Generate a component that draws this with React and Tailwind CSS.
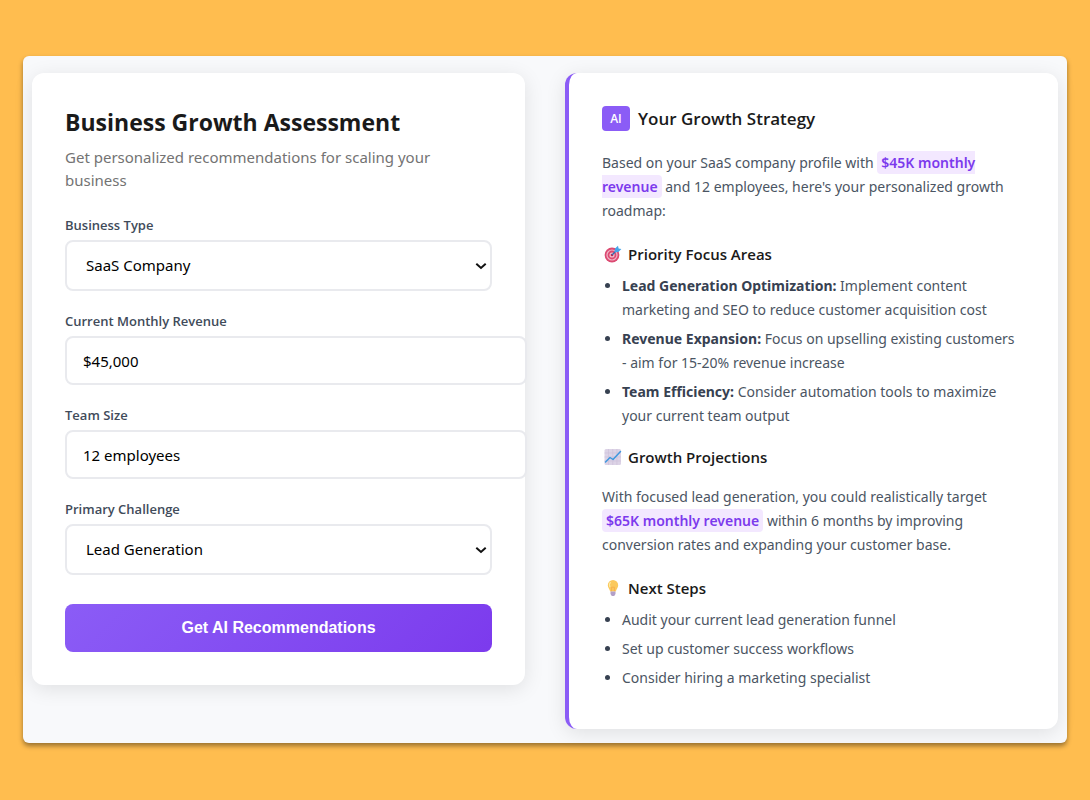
import { useState } from 'react';

const businessTypes = ['SaaS Company', 'E-commerce', 'Agency', 'Consulting'];
const challenges = ['Lead Generation', 'Customer Retention', 'Hiring', 'Operations'];

function SelectField({ id, label, options, value, onChange }) {
  return (
    <div>
      <label htmlFor={id} className="block text-[13px] leading-5 font-semibold text-[#414b5a] mb-[5px]">
        {label}
      </label>
      <div className="relative">
        <select
          id={id}
          value={value}
          onChange={(e) => onChange(e.target.value)}
          className="appearance-none block w-full h-[51px] pl-[19px] pr-8 border-2 border-[#e9eaee] rounded-lg bg-white font-['Noto_Sans',sans-serif] text-[15px] text-black"
        >
          {options.map((o) => (
            <option key={o}>{o}</option>
          ))}
        </select>
        <svg className="absolute right-[5px] top-5 pointer-events-none" width="12" height="12" viewBox="0 0 12 12" fill="none">
          <path d="M1.3 3.8 6 8l4.7-4.2" stroke="#111" strokeWidth="2" />
        </svg>
      </div>
    </div>
  );
}

function TextField({ id, label, value, onChange }) {
  return (
    <div>
      <label htmlFor={id} className="block text-[13px] leading-5 font-semibold text-[#414b5a] mb-[5px]">
        {label}
      </label>
      <input
        id={id}
        type="text"
        value={value}
        onChange={(e) => onChange(e.target.value)}
        className="block w-[calc(100%+35px)] h-[49px] px-4 border-2 border-[#e9eaee] rounded-lg bg-white font-['Noto_Sans',sans-serif] text-[15px] text-black"
      />
    </div>
  );
}

function Highlight({ children }) {
  return <span className="bg-[#f3e8ff] text-[#7c3aed] font-semibold px-1 py-0.5 rounded">{children}</span>;
}

function TargetIcon() {
  return (
    <svg width="18" height="18" viewBox="0 0 18 18" fill="none">
      <circle cx="8" cy="10" r="7.4" fill="#dc4a72" />
      <circle cx="8" cy="10" r="5.6" fill="#f0b4c6" />
      <circle cx="8" cy="10" r="4.4" fill="#dc4a72" />
      <circle cx="8" cy="10" r="2.6" fill="#f3bccb" />
      <circle cx="8" cy="10" r="1.3" fill="#c2264f" />
      <path d="M8 10 13 5" stroke="#2c6fb3" strokeWidth="1.3" />
      <path d="M10.6 7.2 10.8 3.8 14 .8l.6 2.6L17.4 4l-3 3z" fill="#45a5ea" />
    </svg>
  );
}

function ChartIcon() {
  return (
    <svg width="18" height="18" viewBox="0 0 18 18" fill="none">
      <rect x="0.5" y="1" width="16.5" height="16" rx="1.5" fill="#dcd3e6" />
      <path d="M4.5 1v16M8.7 1v16M12.9 1v16M.5 5h16.5M.5 9h16.5M.5 13h16.5" stroke="#cdc2da" strokeWidth="0.7" />
      <path d="M1.5 14 6 9.5l3 2 7.5-8" stroke="#3f98de" strokeWidth="1.5" strokeLinecap="round" strokeLinejoin="round" />
    </svg>
  );
}

function BulbIcon() {
  return (
    <svg width="18" height="18" viewBox="0 0 18 18" fill="none">
      <path d="M9 1a5.2 5.2 0 0 0-5.2 5.2c0 2.4 1.7 3.4 2.4 6.3h5.6c.7-2.9 2.4-3.9 2.4-6.3A5.2 5.2 0 0 0 9 1z" fill="#fbc95c" />
      <path d="M6.2 3.6C5.2 4.8 5.2 6.4 5.8 7.6" stroke="#fde9a8" strokeWidth="1.3" strokeLinecap="round" />
      <path d="M7.6 12.3V8.2h2.8v4.1" stroke="#f6a94a" strokeWidth="0.8" />
      <path d="M6.5 12.5h5v2.6L10.2 17H7.8l-1.3-1.9z" fill="#b3a0c8" />
    </svg>
  );
}

function SectionTitle({ icon, children }) {
  return (
    <h3 className="flex items-center gap-1.5 pl-0.5 font-['Open_Sans',sans-serif] text-[15px] leading-6 font-semibold text-[#1a1a1a]">
      {icon}
      {children}
    </h3>
  );
}

export default function App() {
  const [type, setType] = useState('SaaS Company');
  const [revenue, setRevenue] = useState('$45,000');
  const [team, setTeam] = useState('12 employees');
  const [challenge, setChallenge] = useState('Lead Generation');

  return (
    <div className="min-h-screen bg-[#ffbd4f] px-[23px] py-14 font-['Open_Sans',sans-serif]">
      <main className="grid grid-cols-2 items-start gap-10 rounded-md bg-[#f8f9fb] px-[9px] pt-[17px] pb-3.5 shadow-[0_3px_5px_rgba(0,0,0,0.4)]">
        <section className="rounded-xl bg-white px-[33px] pt-8 pb-[33px] shadow-[0_4px_20px_rgba(0,0,0,0.1)]">
          <h1 className="text-[23px] leading-[34px] font-bold text-[#1a1a1a]">Business Growth Assessment</h1>
          <p className="mt-[7px] font-['Noto_Sans',sans-serif] text-[15px] leading-[23px] text-[#737373]">
            Get personalized recommendations for scaling your business
          </p>

          <form onSubmit={(e) => e.preventDefault()} className="mt-[23px] flex flex-col gap-5">
            <SelectField id="type" label="Business Type" options={businessTypes} value={type} onChange={setType} />
            <TextField id="revenue" label="Current Monthly Revenue" value={revenue} onChange={setRevenue} />
            <TextField id="team" label="Team Size" value={team} onChange={setTeam} />
            <SelectField id="challenge" label="Primary Challenge" options={challenges} value={challenge} onChange={setChallenge} />
            <button
              type="submit"
              className="mt-[9px] h-12 w-full rounded-lg bg-linear-135 from-[#8b5cf6] to-[#7c3aed] font-['Liberation_Sans',sans-serif] text-[16px] font-bold text-white"
            >
              Get AI Recommendations
            </button>
          </form>
        </section>

        <section className="rounded-xl border-l-4 border-[#8b5cf6] bg-white px-[33px] pt-[33px] pb-[34px] font-['Noto_Sans',sans-serif] text-[14px] leading-6 text-[#4b5563] shadow-[0_4px_20px_rgba(0,0,0,0.1)]">
          <div className="flex h-[25px] items-center gap-2 font-['Open_Sans',sans-serif]">
            <span className="flex h-[25px] w-7 items-center justify-center rounded bg-[#8b5cf6] text-[12px] font-semibold text-white">
              AI
            </span>
            <h2 className="text-[17px] font-semibold text-[#1a1a1a]">Your Growth Strategy</h2>
          </div>

          <p className="mt-5 mb-[19px]">
            Based on your SaaS company profile with <Highlight>$45K monthly revenue</Highlight> and 12 employees, here's
            your personalized growth roadmap:
          </p>

          <SectionTitle icon={<TargetIcon />}>Priority Focus Areas</SectionTitle>
          <ul className="mt-2 mb-[17px] list-disc pl-5 marker:text-[#374151]">
            <li className="mb-[5px]">
              <strong className="text-[#374151]">Lead Generation Optimization:</strong> Implement content marketing and
              SEO to reduce customer acquisition cost
            </li>
            <li className="mb-[5px]">
              <strong className="text-[#374151]">Revenue Expansion:</strong> Focus on upselling existing customers{' '}
              <span className="whitespace-nowrap">- aim for</span> 15-20% revenue increase
            </li>
            <li className="mb-[5px]">
              <strong className="text-[#374151]">Team Efficiency:</strong> Consider automation tools to maximize your
              current team output
            </li>
          </ul>

          <SectionTitle icon={<ChartIcon />}>Growth Projections</SectionTitle>
          <p className="mt-4 mb-[19px]">
            With focused lead generation, you could realistically target <Highlight>$65K monthly revenue</Highlight>{' '}
            within 6 months by improving conversion rates and expanding your customer base.
          </p>

          <SectionTitle icon={<BulbIcon />}>Next Steps</SectionTitle>
          <ul className="mt-2 list-disc pl-5 marker:text-[#374151]">
            <li className="mb-[5px]">Audit your current lead generation funnel</li>
            <li className="mb-[5px]">Set up customer success workflows</li>
            <li className="mb-[5px]">Consider hiring a marketing specialist</li>
          </ul>
        </section>
      </main>
    </div>
  );
}
